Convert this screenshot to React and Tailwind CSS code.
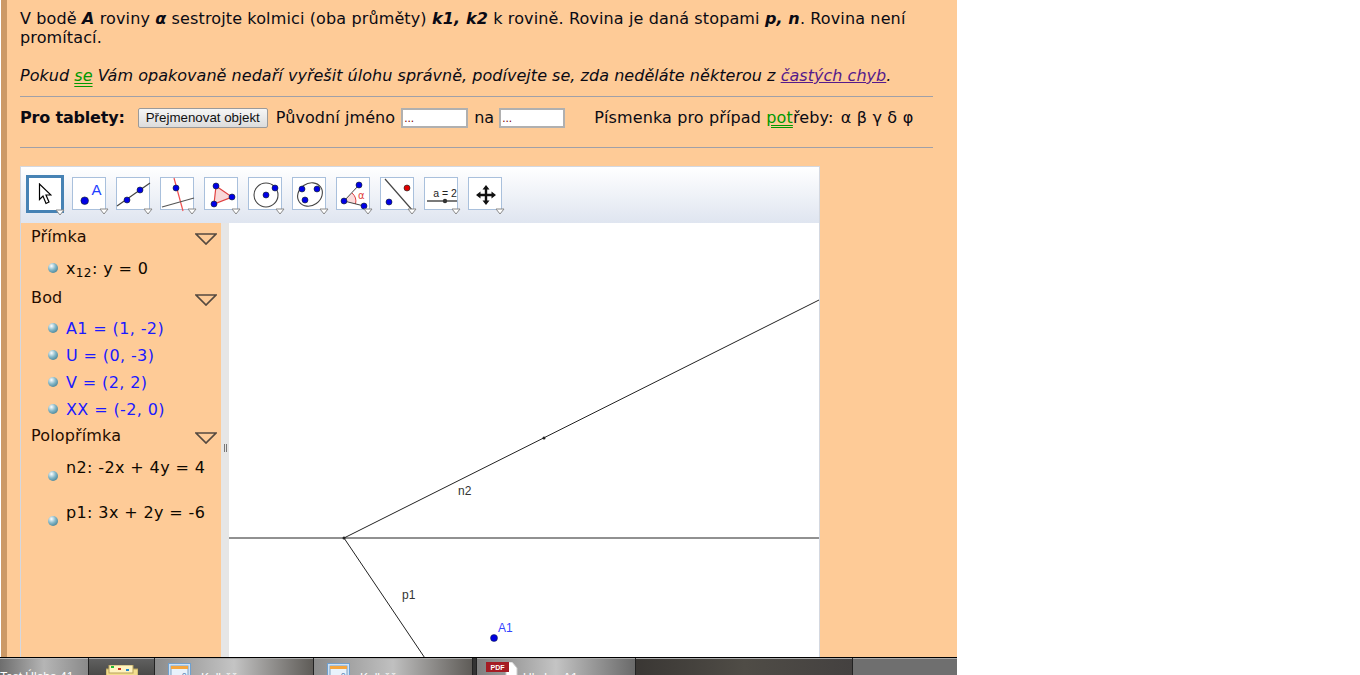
const Dot = ({ x, y, r = 3, c = "#0000e6" }) => <circle cx={x} cy={y} r={r} fill={c} stroke="#122" strokeWidth="0.6" />;

const tools = [
  <><Dot x={11.7} y={22.7} r={3.8} /><text x={18.5} y={17} fontSize="15" fill="#1f3fff" fontFamily="Liberation Sans, sans-serif">A</text></>,
  <><line x1="0" y1="28" x2="33" y2="5" stroke="#444" strokeWidth="1.2" /><Dot x={10} y={22} /><Dot x={23} y={12} /></>,
  <><line x1="13" y1="0" x2="22" y2="33" stroke="#f05050" strokeWidth="1.2" /><line x1="1" y1="29" x2="33" y2="20" stroke="#555" strokeWidth="1.2" /><Dot x={15} y={10} /></>,
  <><polygon points="11,8 27,19 9,26" fill="#f8d8d8" stroke="#e04040" strokeWidth="1.2" /><Dot x={11} y={8} /><Dot x={27} y={19} /><Dot x={9} y={26} /></>,
  <><circle cx="17" cy="17" r="12" fill="none" stroke="#444" strokeWidth="1.1" /><Dot x={17} y={17} /><Dot x={26} y={10} /></>,
  <><ellipse cx="17" cy="16.5" rx="13" ry="11" transform="rotate(-35 17 16.5)" fill="none" stroke="#444" strokeWidth="1.1" /><Dot x={9} y={11} /><Dot x={24} y={11} /><Dot x={12} y={22} /></>,
  <><path d="M7 23 L15 15 A11 11 0 0 1 18.5 26 Z" fill="#fbdcdc" stroke="none" /><path d="M15 15 A11 11 0 0 1 18.5 26" fill="none" stroke="#e04040" /><line x1="7" y1="23" x2="22" y2="7" stroke="#444" /><line x1="7" y1="23" x2="27" y2="28" stroke="#444" /><Dot x={22} y={7} /><Dot x={7} y={23} /><Dot x={27} y={28} /><text x="21" y="21" fontSize="10" fill="#e04040" fontFamily="DejaVu Sans, sans-serif">α</text></>,
  <><line x1="4" y1="1" x2="32" y2="33" stroke="#444" strokeWidth="1.2" /><Dot x={26} y={10} c="#e00000" /><Dot x={8} y={24} /></>,
  <><text x="20" y="19" fontSize="10.5" textAnchor="middle" fill="#222" fontFamily="Liberation Sans, sans-serif">a = 2</text><line x1="2" y1="23" x2="32" y2="23" stroke="#222" strokeWidth="1.2" /><circle cx="20" cy="23" r="2.2" fill="#333" /></>,
  <path d="M17 7 L20.5 11.5 H18.2 V15.8 H22.5 V13.5 L27 17 L22.5 20.5 V18.2 H18.2 V22.5 H20.5 L17 27 L13.5 22.5 H15.8 V18.2 H11.5 V20.5 L7 17 L11.5 13.5 V15.8 H15.8 V11.5 H13.5 Z" fill="#111" />,
];

const Arrow = () => (
  <svg className="absolute right-[-4px] bottom-[-6px] w-[10px] h-[7px]" viewBox="0 0 10 7">
    <polygon points="1,1 9,1 5,6" fill="#fff" stroke="#888" />
  </svg>
);

const Head = ({ children, h }) => (
  <div className={`${h} flex items-center justify-between pl-[10px] pr-[4px] tracking-[0.15px] text-[#260d00]`}>
    <span>{children}</span>
    <svg className="w-[22px] h-[12px] mt-[5px]" viewBox="0 0 22 12">
      <polygon points="1,1 21,1 11,11" fill="none" stroke="#554a40" strokeWidth="1.7" />
    </svg>
  </div>
);

const Row = ({ children, blue, h = "h-[27px]", low }) => (
  <div className={`${h} flex items-center pl-[27px] gap-[8px] tracking-[0.38px] ${blue ? "text-[#1a1aff]" : "text-[#0d0800]"}`}>
    <span className={`w-[10px] h-[10px] rounded-full shrink-0 bg-[radial-gradient(circle_at_35%_30%,#ffffff,#86b8c8_42%,#2a6a80)] ${low ? "mt-[8px]" : "-mt-[2px]"}`} />
    <span className="whitespace-nowrap">{children}</span>
  </div>
);

const LinkG = ({ children }) => <span className="text-[#009900] underline decoration-double underline-offset-2">{children}</span>;

const Input = ({ w }) => (
  <input readOnly value="..." className={`${w} h-[20px] bg-white border-2 border-[#b0b0b0] px-px text-[12px] text-[#800000] font-['Liberation_Sans',sans-serif]`} />
);

const WinIcon = () => (
  <svg className="w-[23px] h-[22px]" viewBox="0 0 23 22">
    <rect x="0.5" y="0.5" width="22" height="21" fill="#cfe2f5" stroke="#6fa0cf" />
    <rect x="3" y="3" width="17" height="16" fill="#e8f2fb" stroke="#7f9fc0" />
    <rect x="3" y="3" width="17" height="3" fill="#f4a640" />
    <text x="14" y="15" fontSize="8" fill="#3d6fa8" fontFamily="Liberation Sans, sans-serif">0</text>
  </svg>
);

const Tab = ({ w, icon, label, cls, iconCls, textCls = "ml-[10px]" }) => (
  <div className={`${w} ${cls} h-full flex items-start shrink-0 overflow-hidden border-t border-[#aaa]`}>
    <div className={iconCls}>{icon}</div>
    {label && <span className={`text-white text-[12px] mt-[10px] whitespace-nowrap font-['Liberation_Sans',sans-serif] ${textCls}`}>{label}</span>}
  </div>
);

export default function App() {
  return (
    <div className="w-[1360px] h-[675px] bg-white overflow-hidden flex flex-col font-['DejaVu_Sans',sans-serif] text-[16px] leading-[19px] text-[#0a0a14]">
      <main className="w-[956px] h-[657px] ml-px border-l-[6px] border-[#cc9966] bg-[#fecb97] overflow-hidden pl-[13px] pr-[24px] pt-[9px] shrink-0">
        <p className="tracking-[0.13px]">
          V bodě <b><i>A</i></b> roviny <b><i>α</i></b> sestrojte kolmici (oba průměty) <b><i>k1, k2</i></b> k rovině. Rovina je daná stopami <b><i>p, n</i></b>. Rovina není promítací.
        </p>
        <p className="mt-[19px] italic tracking-[0.03px]">
          Pokud <LinkG>se</LinkG> Vám opakovaně nedaří vyřešit úlohu správně, podívejte se, zda neděláte některou z <span className="text-[#551a8b] underline">častých chyb</span>.
        </p>
        <div className="h-px bg-[#a0a0a8] mt-[11px]" />
        <div className="flex items-center h-[20px] mt-[11px] whitespace-nowrap">
          <b className="tracking-[-0.18px] pb-[2px]">Pro tablety:</b>
          <button className="ml-[13px] w-[130px] h-[20px] border border-[#9a9a9a] rounded-[2px] bg-gradient-to-b from-[#f6f6f6] to-[#dcdcdc] text-[13.33px] leading-[16px] text-[#111] font-['Liberation_Sans',sans-serif]">Přejmenovat objekt</button>
          <span className="ml-[8px] mr-[6px] tracking-[0.08px] pb-[2px]">Původní jméno</span>
          <Input w="w-[67px]" />
          <span className="ml-[6px] mr-[5px] pb-[2px]">na</span>
          <Input w="w-[66px]" />
          <span className="ml-[29px] tracking-[0.13px] pb-[2px]">Písmenka pro případ <LinkG>pot</LinkG>řeby: <span className="ml-[2px] tracking-[0.2px]">α β γ δ φ</span></span>
        </div>
        <div className="h-px bg-[#a0a0a8] mt-[19px]" />
        <section className="w-[800px] mt-[18px] border border-[#d4d8e0] bg-white">
          <div className="h-[56px] pb-[3px] flex items-center gap-[10px] pl-[5px] bg-gradient-to-b from-white to-[#dfe5f0]">
            <div className="relative w-[38px] h-[38px] mr-[-2px] border-[3px] border-[#4682b4] bg-white flex items-center justify-center">
              <svg className="w-[14px] h-[22px]" viewBox="0 0 14 22">
                <path d="M1.5 1 V16.5 L5 13 L8 20.5 L11 19 L8 12 H13 Z" fill="#fff" stroke="#000" strokeWidth="1.2" />
              </svg>
              <Arrow />
            </div>
            {tools.map((t, i) => (
              <div key={i} className="relative w-[34px] h-[33px] border border-[#a9c0dc] bg-white">
                <svg className="absolute inset-0 w-[34px] h-[33px] overflow-visible" viewBox="0 0 34 33">{t}</svg>
                <Arrow />
              </div>
            ))}
          </div>
          <div className="flex h-[450px]">
            <aside className="w-[200px] shrink-0 bg-[#fecb97]">
              <Head h="h-[26px]">Přímka</Head>
              <div className="mt-[6px]"><Row>x<sub>12</sub>: y = 0</Row></div>
              <Head h="h-[31px]">Bod</Head>
              <div className="mt-[2px]">
                <Row blue>A1 = (1, -2)</Row>
                <Row blue>U = (0, -3)</Row>
                <Row blue>V = (2, 2)</Row>
                <Row blue>XX = (-2, 0)</Row>
              </div>
              <Head h="h-[24px]">Polopřímka</Head>
              <div className="mt-[2px]">
                <Row h="h-[45px]" low><span className="relative -top-[4px]">n2: -2x + 4y = 4</span></Row>
                <Row h="h-[45px]" low><span className="relative -top-[4px]">p1: 3x + 2y = -6</span></Row>
              </div>
            </aside>
            <div className="w-[8px] shrink-0 bg-[#e6e6e6] flex items-center justify-center">
              <span className="flex gap-px"><span className="w-px h-[8px] bg-[#777]" /><span className="w-px h-[8px] bg-[#777]" /></span>
            </div>
            <svg className="w-[590px] h-[450px] shrink-0" viewBox="0 0 590 450">
              <line x1="0" y1="315" x2="590" y2="315" stroke="#222" strokeWidth="1" />
              <line x1="115" y1="315" x2="590" y2="77" stroke="#222" strokeWidth="1" />
              <line x1="115" y1="315" x2="206" y2="450" stroke="#222" strokeWidth="1" />
              <circle cx="115" cy="315" r="1.5" fill="#222" />
              <circle cx="315" cy="215" r="1.5" fill="#222" />
              <text x="229" y="272" fontSize="12" fill="#333" fontFamily="Liberation Sans, sans-serif">n2</text>
              <text x="173" y="376" fontSize="12" fill="#333" fontFamily="Liberation Sans, sans-serif">p1</text>
              <circle cx="265" cy="415" r="3.5" fill="#0000e0" stroke="#123" strokeWidth="0.5" />
              <text x="269" y="409" fontSize="12" fill="#3344ff" fontFamily="Liberation Sans, sans-serif">A1</text>
            </svg>
          </div>
        </section>
      </main>
      <footer className="w-[957px] h-[18px] shrink-0 bg-black pt-px overflow-hidden">
        <div className="flex h-[17px] gap-px bg-[#222]">
          <div className="w-[88px] h-full shrink-0 overflow-hidden border-t border-[#bbb] bg-gradient-to-r from-[#6e6e6e] via-[#b5b5b5] to-[#8a8a8a]">
            <span className="block text-white text-[12px] mt-[9px] whitespace-nowrap font-['Liberation_Sans',sans-serif]">Test Úloha 41</span>
          </div>
          <Tab w="w-[65px]" cls="bg-gradient-to-b from-[#606060] to-[#4a4a48]" iconCls="ml-[17px] mt-[6px]" icon={
            <svg className="w-[32px] h-[18px]" viewBox="0 0 32 18">
              <rect x="0" y="4" width="32" height="14" fill="#f2dd8e" stroke="#b9a35a" />
              <rect x="3" y="0" width="24" height="8" fill="#fff3c0" stroke="#b9a35a" />
              <rect x="5" y="1" width="3" height="2" fill="#22bb33" />
              <rect x="12" y="3" width="3" height="2" fill="#cc3322" />
              <rect x="20" y="4" width="3" height="2" fill="#2288cc" />
            </svg>
          } />
          <Tab w="w-[158px]" cls="bg-gradient-to-r from-[#8c8c8c] via-[#c4c4c4] to-[#5f5c58]" iconCls="ml-[13px] mt-[4px]" icon={<WinIcon />} label="Kolběžn" />
          <Tab w="w-[158px]" cls="bg-gradient-to-r from-[#8c8c8c] via-[#c0c0c0] to-[#5f5c58]" iconCls="ml-[13px] mt-[4px]" icon={<WinIcon />} label="Kolběžn" />
          <div className="w-[3px] bg-[#333] shrink-0" />
          <Tab w="w-[158px]" cls="bg-gradient-to-r from-[#7f7f7f] via-[#c4c4c4] to-[#6a6a6a]" iconCls="ml-[9px] mt-[3px]" textCls="ml-[5px]" icon={
            <svg className="w-[32px] h-[18px]" viewBox="0 0 32 18">
              <path d="M20 0 H26 L31 6 V18 H20 Z" fill="#fff" stroke="#ccc" />
              <rect x="0" y="0" width="23" height="10" fill="#a51c24" />
              <text x="11.5" y="8" fontSize="7" fontWeight="bold" textAnchor="middle" fill="#fff" fontFamily="Liberation Sans, sans-serif">PDF</text>
            </svg>
          } label="Ukolen A1" />
          <div className="flex-1 border-t border-[#aaa] bg-gradient-to-r from-[#3a3734] via-[#4f4c46] to-[#444140]" />
          <div className="w-[104px] shrink-0 border-t border-[#aaa] bg-[#6f6f6f]" />
        </div>
      </footer>
    </div>
  );
}
